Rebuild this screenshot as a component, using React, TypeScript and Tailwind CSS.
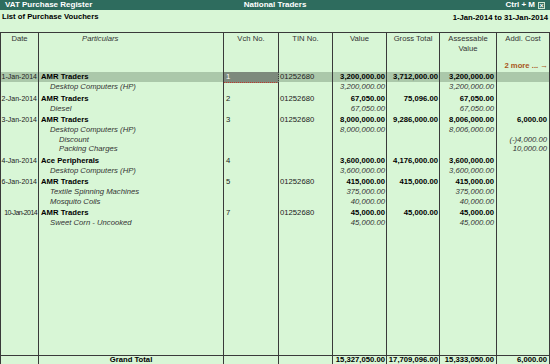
import React from "react"

type Line = {
  kind: "main" | "sub" | "sub2"
  date?: string
  name: string
  vch?: string
  tin?: string
  value?: string
  gross?: string
  assess?: string
  addl?: string
  first?: boolean
  active?: boolean
}

const LINES: Line[] = [
  { kind: "main", date: "1-Jan-2014", name: "AMR Traders", vch: "1", tin: "01252680", value: "3,200,000.00", gross: "3,712,000.00", assess: "3,200,000.00", first: true, active: true },
  { kind: "sub", name: "Desktop Computers (HP)", value: "3,200,000.00", assess: "3,200,000.00" },
  { kind: "main", date: "2-Jan-2014", name: "AMR Traders", vch: "2", tin: "01252680", value: "67,050.00", gross: "75,096.00", assess: "67,050.00" },
  { kind: "sub", name: "Diesel", value: "67,050.00", assess: "67,050.00" },
  { kind: "main", date: "3-Jan-2014", name: "AMR Traders", vch: "3", tin: "01252680", value: "8,000,000.00", gross: "9,286,000.00", assess: "8,006,000.00", addl: "6,000.00" },
  { kind: "sub", name: "Desktop Computers (HP)", value: "8,000,000.00", assess: "8,006,000.00" },
  { kind: "sub2", name: "Discount", addl: "(-)4,000.00" },
  { kind: "sub2", name: "Packing Charges", addl: "10,000.00" },
  { kind: "main", date: "4-Jan-2014", name: "Ace Peripherals", vch: "4", value: "3,600,000.00", gross: "4,176,000.00", assess: "3,600,000.00" },
  { kind: "sub", name: "Desktop Computers (HP)", value: "3,600,000.00", assess: "3,600,000.00" },
  { kind: "main", date: "6-Jan-2014", name: "AMR Traders", vch: "5", tin: "01252680", value: "415,000.00", gross: "415,000.00", assess: "415,000.00" },
  { kind: "sub", name: "Textile Spinning Machines", value: "375,000.00", assess: "375,000.00" },
  { kind: "sub", name: "Mosquito Coils", value: "40,000.00", assess: "40,000.00" },
  { kind: "main", date: "10-Jan-2014", name: "AMR Traders", vch: "7", tin: "01252680", value: "45,000.00", gross: "45,000.00", assess: "45,000.00" },
  { kind: "sub", name: "Sweet Corn - Uncooked", value: "45,000.00", assess: "45,000.00" },
]

const COLS = "grid grid-cols-[38px_185px_55px_54px_54px_53px_57px_53px]"

function Cell({ children, className = "" }: { children?: React.ReactNode; className?: string }) {
  return <div className={`border-r border-[#3a3a3a] whitespace-nowrap ${className}`}>{children}</div>
}

function Row({ line }: { line: Line }) {
  const main = line.kind === "main"
  const pad = main && !line.first ? "pt-[2px]" : ""
  const h = main ? (line.first ? "h-[10px]" : "h-[12px]") : "h-[9.5px]"
  const bg = line.active ? "bg-[#abc8aa]" : ""
  const num = main ? "font-bold text-black" : "italic text-[#333]"

  return (
    <div className={`${COLS} ${h} leading-[10px] ${bg}`}>
      <Cell className={`${pad} text-right pr-[1px] text-[7px] ${line.date && line.date.length > 10 ? "tracking-[-0.6px]" : ""}`}>
        {line.date}
      </Cell>
      <Cell
        className={`${pad} ${
          main ? "pl-[2px] font-bold text-black" : line.kind === "sub" ? "pl-[11px] italic text-[#333]" : "pl-[20px] italic text-[#333]"
        }`}
      >
        {line.name}
      </Cell>
      <Cell className={`${line.active ? "bg-[#7d8a7c] text-white border-b border-dotted border-b-[#c0392b]" : ""} ${pad} pl-[2px]`}>
        {line.vch}
      </Cell>
      <Cell className={`${pad} pl-[1px]`}>{line.tin}</Cell>
      <Cell className={`${pad} text-right pr-[1px] ${num}`}>{line.value}</Cell>
      <Cell className={`${pad} text-right pr-[1px] ${num}`}>{line.gross}</Cell>
      <Cell className={`${pad} text-right pr-[2px] ${num}`}>{line.assess}</Cell>
      <Cell className={`${pad} text-right pr-[2px] ${num}`}>{line.addl}</Cell>
    </div>
  )
}

export default function App() {
  return (
    <div className="w-[550px] h-[364px] flex flex-col bg-[#d8f6d6] text-[7.7px] text-[#222] font-['Liberation_Sans',Arial,sans-serif] overflow-hidden">
      {/* Title bar */}
      <div className="grid grid-cols-3 h-[10px] bg-[#2e6c5e] text-white font-bold text-[8px] leading-[10px] px-[5px]">
        <span>VAT Purchase Register</span>
        <span className="text-center">National Traders</span>
        <div className="flex justify-end items-center gap-[3px]">
          <span>Ctrl + M</span>
          <span className="w-[7px] h-[7px] border border-[#cfe6cf] flex items-center justify-center text-[7px] leading-none">×</span>
        </div>
      </div>

      {/* Sub header */}
      <div className="h-[23px] flex justify-between border-b border-[#3a3a3a] font-bold text-black pt-[2px] px-[2px]">
        <span className="leading-[10px]">List of Purchase Vouchers</span>
        <span className="leading-[10px] pt-[1px]">1-Jan-2014 to 31-Jan-2014</span>
      </div>

      {/* Column headers */}
      <div className="border-l border-[#3a3a3a] flex flex-col flex-1">
        <div className={`${COLS} h-[39px] leading-[10px] text-[#333]`}>
          <Cell className="text-center pt-[1px]">Date</Cell>
          <Cell className="pl-[43px] pt-[1px] italic">Particulars</Cell>
          <Cell className="text-center pt-[1px]">Vch No.</Cell>
          <Cell className="text-center pt-[1px]">TIN No.</Cell>
          <Cell className="text-center pt-[1px]">Value</Cell>
          <Cell className="text-center pt-[1px]">Gross Total</Cell>
          <Cell className="text-center pt-[1px]">
            Assessable
            <br />
            Value
          </Cell>
          <Cell className="flex flex-col justify-between items-center pt-[1px] pb-[1px]">
            <span>Addl. Cost</span>
            <span className="self-end pr-[1px] font-bold text-[#a8581c]">2 more ... →</span>
          </Cell>
        </div>

        {LINES.map((line, i) => (
          <Row key={i} line={line} />
        ))}

        {/* Filler */}
        <div className={`${COLS} flex-1`}>
          <Cell />
          <Cell />
          <Cell />
          <Cell />
          <Cell />
          <Cell />
          <Cell />
          <Cell />
        </div>

        {/* Grand total */}
        <div className={`${COLS} h-[9px] border-t border-[#3a3a3a] leading-[8px] font-bold text-black`}>
          <Cell />
          <Cell className="text-center">Grand Total</Cell>
          <Cell />
          <Cell />
          <Cell className="text-right pr-[1px]">15,327,050.00</Cell>
          <Cell className="text-right pr-[1px]">17,709,096.00</Cell>
          <Cell className="text-right pr-[2px]">15,333,050.00</Cell>
          <Cell className="text-right pr-[2px]">6,000.00</Cell>
        </div>
      </div>
    </div>
  )
}
